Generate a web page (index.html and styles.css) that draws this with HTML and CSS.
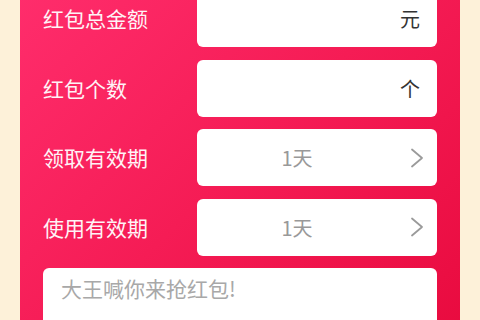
FILE: index.html
```html
<!DOCTYPE html>
<html lang="zh">

<head>
  <meta charset="UTF-8">
  <meta name="viewport" content="width=device-width, initial-scale=1.0">
  <title>发红包</title>
  <link rel="stylesheet" href="styles.css">
</head>

<body>
  <div class="panel">
    <div class="row">
      <div class="label">红包总金额</div>
      <div class="box">
        <span class="input"></span>
        <span class="unit">元</span>
      </div>
    </div>
    <div class="row">
      <div class="label">红包个数</div>
      <div class="box">
        <span class="input"></span>
        <span class="unit">个</span>
      </div>
    </div>
    <div class="row">
      <div class="label">领取有效期</div>
      <div class="box">
        <span class="value">1天</span>
        <span class="arrow">
          <svg width="14" height="20" viewBox="0 0 14 20"><path d="M2 1.5 L12 10 L2 18.5" fill="none" stroke="#9a9a9a" stroke-width="1.8" stroke-linecap="round" stroke-linejoin="round"/></svg>
        </span>
      </div>
    </div>
    <div class="row">
      <div class="label">使用有效期</div>
      <div class="box">
        <span class="value">1天</span>
        <span class="arrow">
          <svg width="14" height="20" viewBox="0 0 14 20"><path d="M2 1.5 L12 10 L2 18.5" fill="none" stroke="#9a9a9a" stroke-width="1.8" stroke-linecap="round" stroke-linejoin="round"/></svg>
        </span>
      </div>
    </div>
    <div class="message">大王喊你来抢红包!</div>
  </div>
</body>

</html>
```

FILE: styles.css
```css
* {
  box-sizing: border-box;
}

body {
  margin: 0;
  padding: 0 20px;
  height: 320px;
  overflow: hidden;
  background-color: #fdf1d9;
  font-family: "Noto Sans CJK SC", "Noto Sans", sans-serif;
}

.panel {
  margin-top: -10px;
  padding: 0 23px 40px;
  min-height: 400px;
  background: linear-gradient(135deg, #ff2d6c 0%, #f51c55 45%, #e6073a 100%);
}

.row {
  display: flex;
  align-items: center;
  height: 57px;
  margin-bottom: 12.5px;
}

.label {
  flex: 1;
  color: #fff3f6;
  font-size: 21px;
  line-height: 1;
}

.box {
  display: flex;
  align-items: center;
  width: 240px;
  height: 100%;
  background-color: #fff;
  border-radius: 6px;
  font-size: 20px;
}

.input {
  flex: 1;
}

.unit {
  padding-right: 17px;
  color: #333;
}

.value {
  flex: 1;
  text-align: center;
  color: #999;
}

.arrow {
  display: flex;
  justify-content: center;
  align-items: center;
  width: 40px;
}

.message {
  height: 110px;
  padding: 5px 18px;
  background-color: #fff;
  border-radius: 6px;
  color: #a8a8a8;
  font-size: 21px;
}
```
